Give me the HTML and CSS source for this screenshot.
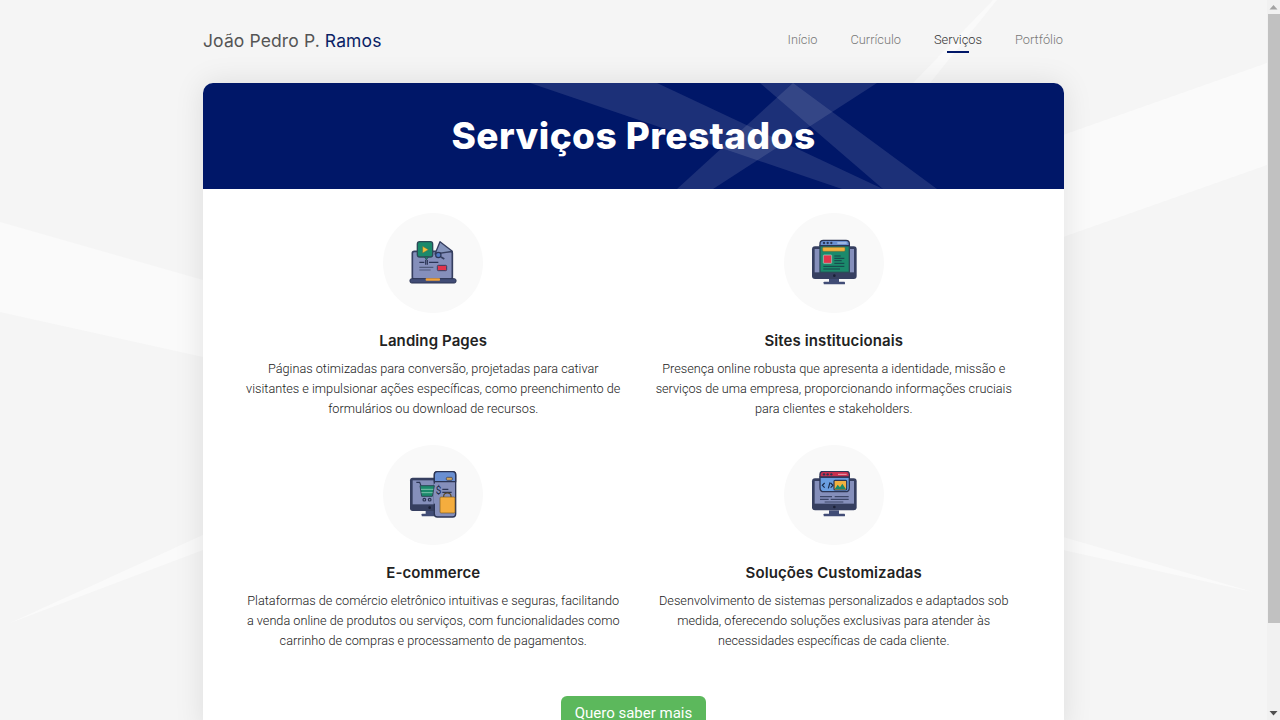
FILE: index.html
```html
<!DOCTYPE html>
<html lang="pt-BR">
<head>
<meta charset="UTF-8">
<meta name="viewport" content="width=device-width, initial-scale=1.0">
<title>Serviços Prestados</title>
<link rel="stylesheet" href="styles.css">
</head>
<body>
<div class="app">
    <div class="viewport">
        <!-- faixas claras do fundo -->
        <svg class="bg-rays" viewBox="0 0 1267 720" aria-hidden="true">
            <polygon points="0,222 203,280 203,357 0,312"/>
            <polygon points="1063,135 1267,63 1267,165 1063,237"/>
            <polygon points="913,83 993,0 997,0 930,83"/>
            <polygon points="10,623 203,535 203,550"/>
            <polygon points="1063,537 1253,592 1063,550"/>
        </svg>

        <div class="container">
            <header class="topbar">
                <div class="brand">João Pedro P. <span>Ramos</span></div>
                <nav class="menu">
                    <a href="#">Início</a>
                    <a href="#">Currículo</a>
                    <a href="#" class="active">Serviços</a>
                    <a href="#">Portfólio</a>
                </nav>
            </header>

            <main class="card">
                <div class="hero">
                    <svg class="hero-rays" viewBox="0 0 860 106" aria-hidden="true">
                        <polygon points="327,0 454,0 680,106 639,106"/>
                        <polygon points="557,0 590,0 734,106 680,106"/>
                        <polygon points="590,0 674,0 510,106 474,106"/>
                    </svg>
                    <h1>Serviços Prestados</h1>
                </div>

                <div class="services">
                    <section class="service">
                        <div class="service-icon">
                            <svg viewBox="0 0 144 144">
                                <rect x="10" y="37" width="120" height="84" rx="6" fill="#858fbb" stroke="#363f60" stroke-width="5"/>
                                <rect x="3" y="119" width="138" height="13" rx="5" fill="#414c76" stroke="#2c3555" stroke-width="3"/>
                                <rect x="50" y="118" width="43" height="7" rx="2" fill="#f2a33a"/>
                                <polygon points="93,8 130,37 78,45" fill="#8695bd" stroke="#363f60" stroke-width="4" stroke-linejoin="round"/>
                                <circle cx="88" cy="48" r="8" fill="#4f79c4" stroke="#2c3555" stroke-width="3.5"/>
                                <path d="M96,54 L106,60" stroke="#363f60" stroke-width="5"/>
                                <rect x="25" y="8" width="46" height="46" rx="7" fill="#1b8a6b" stroke="#2c4a58" stroke-width="4"/>
                                <polygon points="58,54 52,63 47,54" fill="#1b8a6b" stroke="#2c4a58" stroke-width="2.5"/>
                                <polygon points="41,22 58,32 41,42" fill="#f5c33d" stroke="#6d6a3a" stroke-width="1.5"/>
                                <path d="M31,70 H46 M60,70 H88" stroke="#2c3555" stroke-width="3.5"/>
                                <path d="M50,63 V77 M55,63 V77" stroke="#2c3555" stroke-width="3.5"/>
                                <path d="M31,85 H73 M31,93 H65" stroke="#515b7c" stroke-width="3.5"/>
                                <rect x="85" y="79" width="28" height="16" rx="3" fill="#e2344c" stroke="#363f60" stroke-width="3"/>
                            </svg>
                        </div>
                        <h3>Landing Pages</h3>
                        <p>Páginas otimizadas para conversão, projetadas para cativar visitantes e impulsionar ações específicas, como preenchimento de formulários ou download de recursos.</p>
                    </section>

                    <section class="service">
                        <div class="service-icon">
                            <svg viewBox="0 0 144 144">
                                <rect x="6" y="22" width="134" height="98" rx="9" fill="#363f60"/>
                                <rect x="14" y="30" width="118" height="70" fill="#858fbb"/>
                                <rect x="57" y="120" width="30" height="10" fill="#414c76"/>
                                <rect x="41" y="128" width="64" height="8" rx="2" fill="#414c76"/>
                                <circle cx="73" cy="110" r="4" fill="#1a2036"/>
                                <rect x="30" y="20" width="88" height="80" fill="#1b8a6b" stroke="#2c4a58" stroke-width="4"/>
                                <path d="M30,20 V14 Q30,4 40,4 H108 Q118,4 118,14 V20 Z" fill="#6a8fd1" stroke="#2c3555" stroke-width="4"/>
                                <circle cx="42" cy="12" r="3.5" fill="#2c3654"/>
                                <circle cx="53" cy="12" r="3.5" fill="#2c3654"/>
                                <circle cx="64" cy="12" r="3.5" fill="#2c3654"/>
                                <path d="M82,12 H110" stroke="#cfdcf3" stroke-width="3"/>
                                <rect x="38" y="25" width="67" height="12" rx="3" fill="#f2b13f" stroke="#8a6a2a" stroke-width="1.5"/>
                                <rect x="40" y="48" width="25" height="25" rx="2" fill="#e2344c" stroke="#a9dccb" stroke-width="2"/>
                                <path d="M73,51 H92 M73,58 H103 M73,65 H95 M73,73 H103 M40,82 H103 M40,90 H90" stroke="#17424a" stroke-width="3"/>
                            </svg>
                        </div>
                        <h3>Sites institucionais</h3>
                        <p>Presença online robusta que apresenta a identidade, missão e serviços de uma empresa, proporcionando informações cruciais para clientes e stakeholders.</p>
                    </section>

                    <section class="service">
                        <div class="service-icon">
                            <svg viewBox="0 0 144 144">
                                <rect x="3" y="20" width="96" height="100" rx="8" fill="#363f60"/>
                                <rect x="11" y="28" width="84" height="72" fill="#858fbb"/>
                                <rect x="50" y="120" width="26" height="10" fill="#414c76"/>
                                <rect x="38" y="128" width="50" height="8" rx="2" fill="#414c76"/>
                                <circle cx="62" cy="110" r="4" fill="#1a2036"/>
                                <rect x="76" y="2" width="64" height="136" rx="9" fill="#858fbb" stroke="#2c3555" stroke-width="4"/>
                                <rect x="74" y="38" width="8" height="60" fill="#858fbb"/>
                                <path d="M76,32 V11 Q76,2 85,2 H131 Q140,2 140,11 V32 Z" fill="#6a8fd1" stroke="#2c3555" stroke-width="4"/>
                                <rect x="112" y="19" width="18" height="9" rx="3" fill="#d0a55a" stroke="#2c3555" stroke-width="2"/>
                                <path d="M22,34 H32 L36,44" fill="none" stroke="#2c3555" stroke-width="3.5"/>
                                <polygon points="33,44 76,44 70,76 38,76" fill="#1b8a6b" stroke="#2c4a58" stroke-width="3"/>
                                <path d="M36,55 H73 M37,65 H71" stroke="#a9dccb" stroke-width="2"/>
                                <circle cx="46" cy="86" r="4" fill="none" stroke="#2c3555" stroke-width="3.5"/>
                                <circle cx="62" cy="86" r="4" fill="none" stroke="#2c3555" stroke-width="3.5"/>
                                <text class="icon-dollar" x="80" y="70">$</text>
                                <path d="M100,55 H118 M100,64 H128" stroke="#2c3555" stroke-width="3.5"/>
                                <path d="M104,84 V76 Q104,66 115,66 Q126,66 126,76 V84" fill="none" stroke="#5a4520" stroke-width="3.5"/>
                                <rect x="93" y="78" width="45" height="48" rx="3" fill="#f5ad3e" stroke="#7a5a22" stroke-width="2"/>
                            </svg>
                        </div>
                        <h3>E-commerce</h3>
                        <p>Plataformas de comércio eletrônico intuitivas e seguras, facilitando a venda online de produtos ou serviços, com funcionalidades como carrinho de compras e processamento de pagamentos.</p>
                    </section>

                    <section class="service">
                        <div class="service-icon">
                            <svg viewBox="0 0 144 144">
                                <rect x="6" y="22" width="134" height="96" rx="9" fill="#363f60"/>
                                <rect x="14" y="30" width="118" height="68" fill="#858fbb"/>
                                <rect x="57" y="118" width="30" height="12" fill="#414c76"/>
                                <rect x="41" y="128" width="64" height="8" rx="2" fill="#414c76"/>
                                <circle cx="73" cy="108" r="4" fill="#1a2036"/>
                                <path d="M30,18 H118 V50 Q118,62 106,62 H42 Q30,62 30,50 Z" fill="#6a9ee0" stroke="#2c3555" stroke-width="4"/>
                                <path d="M30,18 V10 Q30,1 39,1 H109 Q118,1 118,10 V18 Z" fill="#c9304f" stroke="#2c3555" stroke-width="4"/>
                                <circle cx="42" cy="10" r="3.5" fill="#2c3654"/>
                                <circle cx="53" cy="10" r="3.5" fill="#2c3654"/>
                                <circle cx="64" cy="10" r="3.5" fill="#2c3654"/>
                                <path d="M84,10 H110" stroke="#e9a5b2" stroke-width="3"/>
                                <path d="M44,36 L37,43 L44,50 M55,52 L60,34 M62,36 L69,43 L62,50" fill="none" stroke="#1a2a4a" stroke-width="3.5"/>
                                <rect x="72" y="28" width="38" height="29" rx="3" fill="#f2b13f" stroke="#2c3555" stroke-width="3.5"/>
                                <path d="M74,55 L83,41 L90,49 L97,38 L108,55 Z" fill="#1b8a6b"/>
                                <path d="M30,77 H66 M74,77 H116 M30,85 H56 M62,85 H116 M44,93 H100" stroke="#3c4668" stroke-width="3.5"/>
                            </svg>
                        </div>
                        <h3>Soluções Customizadas</h3>
                        <p>Desenvolvimento de sistemas personalizados e adaptados sob medida, oferecendo soluções exclusivas para atender às necessidades específicas de cada cliente.</p>
                    </section>
                </div>

                <div class="actions">
                    <a href="#" class="btn">Quero saber mais</a>
                </div>
            </main>
        </div>
    </div>

    <div class="scrollbar" aria-hidden="true">
        <svg class="scroll-arrow" viewBox="0 0 13 14"><polygon points="6.5,5 10.5,9.5 2.5,9.5"/></svg>
        <div class="scroll-track"><div class="scroll-thumb"></div></div>
        <svg class="scroll-arrow down" viewBox="0 0 13 14"><polygon points="2.5,5 10.5,5 6.5,9.5"/></svg>
    </div>
</div>
</body>
</html>
```

FILE: styles.css
```css
html, body {
    margin: 0;
    padding: 0;
    height: 100%;
}
body {
    font-family: 'Roboto', 'Liberation Sans', sans-serif;
    background-color: #f5f5f5;
    overflow: hidden;
}
.app {
    display: flex;
    height: 100vh;
}
.viewport {
    flex: 1;
    position: relative;
    overflow: hidden;
}
.bg-rays {
    position: absolute;
    top: 0;
    left: 0;
    width: 1267px;
    height: 720px;
    fill: #fafafa;
}
.container {
    position: relative;
    width: 861px;
    margin: 0 auto;
}
.topbar {
    height: 83px;
    display: flex;
    align-items: center;
    justify-content: space-between;
}
.brand {
    font-family: 'Inter', 'Liberation Sans', sans-serif;
    font-size: 17.5px;
    letter-spacing: 0.12px;
    color: #555;
    margin-top: -3px;
}
.brand span {
    color: #0a1f66;
}
.menu {
    display: flex;
    gap: 33px;
    margin-top: -5px;
    padding-right: 1px;
}
.menu a {
    position: relative;
    font-size: 12.8px;
    font-weight: 300;
    color: #777;
    text-decoration: none;
}
.menu a.active {
    color: #333;
}
.menu a.active::after {
    content: "";
    position: absolute;
    left: 13px;
    right: 13px;
    bottom: -6px;
    height: 2px;
    background-color: #001768;
}
.card {
    background-color: #fff;
    border-radius: 10px 10px 0 0;
    box-shadow: 0 0 30px rgba(0, 0, 0, 0.1);
}
.hero {
    position: relative;
    box-sizing: border-box;
    height: 106px;
    padding-bottom: 2px;
    background-color: #001768;
    border-radius: 10px 10px 0 0;
    overflow: hidden;
    display: flex;
    align-items: center;
    justify-content: center;
}
.hero-rays {
    position: absolute;
    top: 0;
    left: 0;
    width: 860px;
    height: 106px;
    fill: rgba(255, 255, 255, 0.11);
}
.hero h1 {
    position: relative;
    margin: 0;
    font-family: 'Inter', 'Liberation Sans', sans-serif;
    font-size: 37px;
    font-weight: 800;
    letter-spacing: 0.45px;
    color: #fff;
}
.services {
    display: grid;
    grid-template-columns: 1fr 1fr;
    row-gap: 26px;
    padding: 24px 30px 0;
}
.service {
    padding: 0 10px;
    text-align: center;
}
.service-icon {
    width: 100px;
    height: 100px;
    margin: 0 auto;
    border-radius: 50%;
    background-color: #f9f9f9;
    display: flex;
    align-items: center;
    justify-content: center;
}
.service-icon svg {
    width: 48px;
    height: 48px;
}
.icon-dollar {
    font-family: 'Roboto', sans-serif;
    font-size: 30px;
    fill: #1a2a4a;
}
.service h3 {
    margin: 18px 0 8px;
    font-family: 'Inter', 'Liberation Sans', sans-serif;
    font-size: 15px;
    line-height: 20px;
    font-weight: 600;
    letter-spacing: 0.1px;
    color: #222;
}
.service p {
    margin: 0;
    font-size: 12.7px;
    line-height: 20px;
    font-weight: 300;
    color: #222;
}
.actions {
    display: flex;
    justify-content: center;
    padding-top: 45px;
}
.btn {
    display: block;
    padding: 7px 14px 8px;
    font-size: 15px;
    line-height: 20px;
    color: #fff;
    text-decoration: none;
    background-color: #5cb85c;
    border-radius: 6px;
}
.scrollbar {
    width: 13px;
    flex-shrink: 0;
    display: flex;
    flex-direction: column;
    background-color: #f1f1f1;
}
.scroll-arrow {
    display: block;
    width: 13px;
    height: 14px;
    fill: #a3a3a3;
}
.scroll-arrow.down {
    fill: #505050;
}
.scroll-track {
    flex: 1;
    padding-left: 1px;
}
.scroll-thumb {
    height: 609px;
    background-color: #c1c1c1;
}
```
